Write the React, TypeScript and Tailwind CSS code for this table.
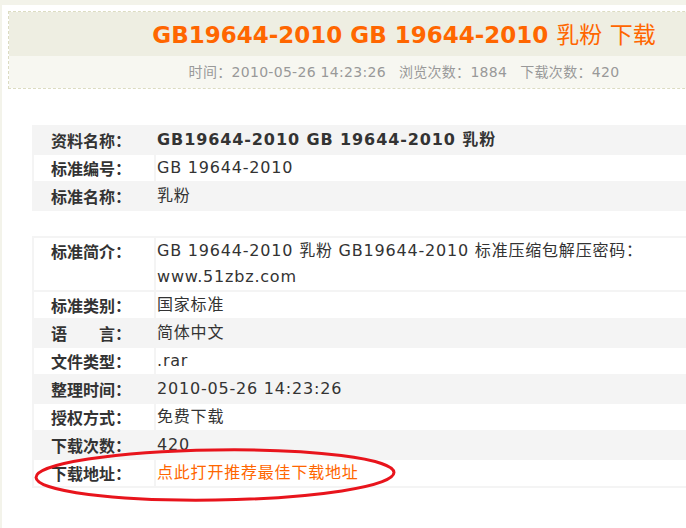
import React from "react";

const V = { fontFamily: '"DejaVu Sans", "Noto Sans CJK SC", sans-serif' };
const L = { fontFamily: '"Noto Sans CJK SC", "DejaVu Sans", sans-serif' };

type Row = { label: React.ReactNode; value: React.ReactNode; bold?: boolean; top?: boolean };

function InfoTable({ rows, className }: { rows: Row[]; className?: string }) {
  return (
    <table className={"border-separate border-spacing-[2px] bg-[#f4f4f4] w-[760px] " + (className ?? "")}>
      <tbody>
        {rows.map((r, i) => {
          const bg = i % 2 === 0 ? (r.top ? "bg-white" : "bg-[#f4f4f4]") : "bg-white";
          return (
            <tr key={i}>
              <td
                style={L}
                className={`${bg} w-[120px] pl-[17px] h-[26px] leading-[26px] text-[16px] font-bold text-[#333] whitespace-pre ${r.top ? "align-top" : "align-middle"}`}
              >
                {r.label}
              </td>
              <td
                style={V}
                className={`${bg} pl-[1px] leading-[26px] text-[16px] text-[#333] ${r.bold ? "font-bold tracking-[0.9px]" : "tracking-[0.8px]"}`}
              >
                {r.value}
              </td>
            </tr>
          );
        })}
      </tbody>
    </table>
  );
}

export default function App() {
  const t1: Row[] = [
    { label: "资料名称：", value: "GB19644-2010 GB 19644-2010 乳粉", bold: true },
    { label: "标准编号：", value: "GB 19644-2010" },
    { label: "标准名称：", value: "乳粉" },
  ];
  const t2: Row[] = [
    {
      label: "标准简介：",
      value: (
        <>
          GB 19644-2010 乳粉 GB19644-2010 标准压缩包解压密码：
          <br />
          www.51zbz.com
        </>
      ),
      top: true,
    },
    { label: "标准类别：", value: "国家标准" },
    { label: "语　　言：", value: "简体中文" },
    { label: "文件类型：", value: ".rar" },
    { label: "整理时间：", value: "2010-05-26 14:23:26" },
    { label: "授权方式：", value: "免费下载" },
    { label: "下载次数：", value: "420" },
    {
      label: "下载地址：",
      value: <span className="text-[#ff6600] tracking-[0.8px]">点此打开推荐最佳下载地址</span>,
    },
  ];

  return (
    <div className="relative w-[686px] h-[528px] overflow-hidden bg-[#f3f3ea] pl-[2px] pt-[5px]">
      <div className="bg-white w-[820px] h-[523px] pl-[6px] pt-[6px]">
        <div className="w-[792px] border border-dashed border-[#dcdcc2]">
          <div className="h-[44px] pt-[2px] bg-[#eeeee2] flex items-center justify-center">
            <h1 style={V} className="text-[23px] font-bold text-[#ff6600] leading-none">
              GB19644-2010 GB 19644-2010 <span className="font-normal">乳粉 下载</span>
            </h1>
          </div>
          <div className="h-[32px] bg-[#f7f7f1] flex items-center justify-center">
            <p style={V} className="text-[14px] text-[#999] leading-none tracking-[0.3px]">
              时间：2010-05-26 14:23:26
              <span className="ml-[13px]">浏览次数：1884</span>
              <span className="ml-[13px]">下载次数：420</span>
            </p>
          </div>
        </div>

        <InfoTable rows={t1} className="ml-[24px] mt-[36px]" />
        <InfoTable rows={t2} className="ml-[24px] mt-[25px]" />
      </div>

      <svg className="absolute left-[30px] top-[444px]" width="372" height="62" viewBox="0 0 372 62">
        <ellipse cx="185" cy="31" rx="179" ry="25" fill="none" stroke="#e8141c" strokeWidth="3" transform="rotate(-0.8 185 31)" />
      </svg>
    </div>
  );
}
